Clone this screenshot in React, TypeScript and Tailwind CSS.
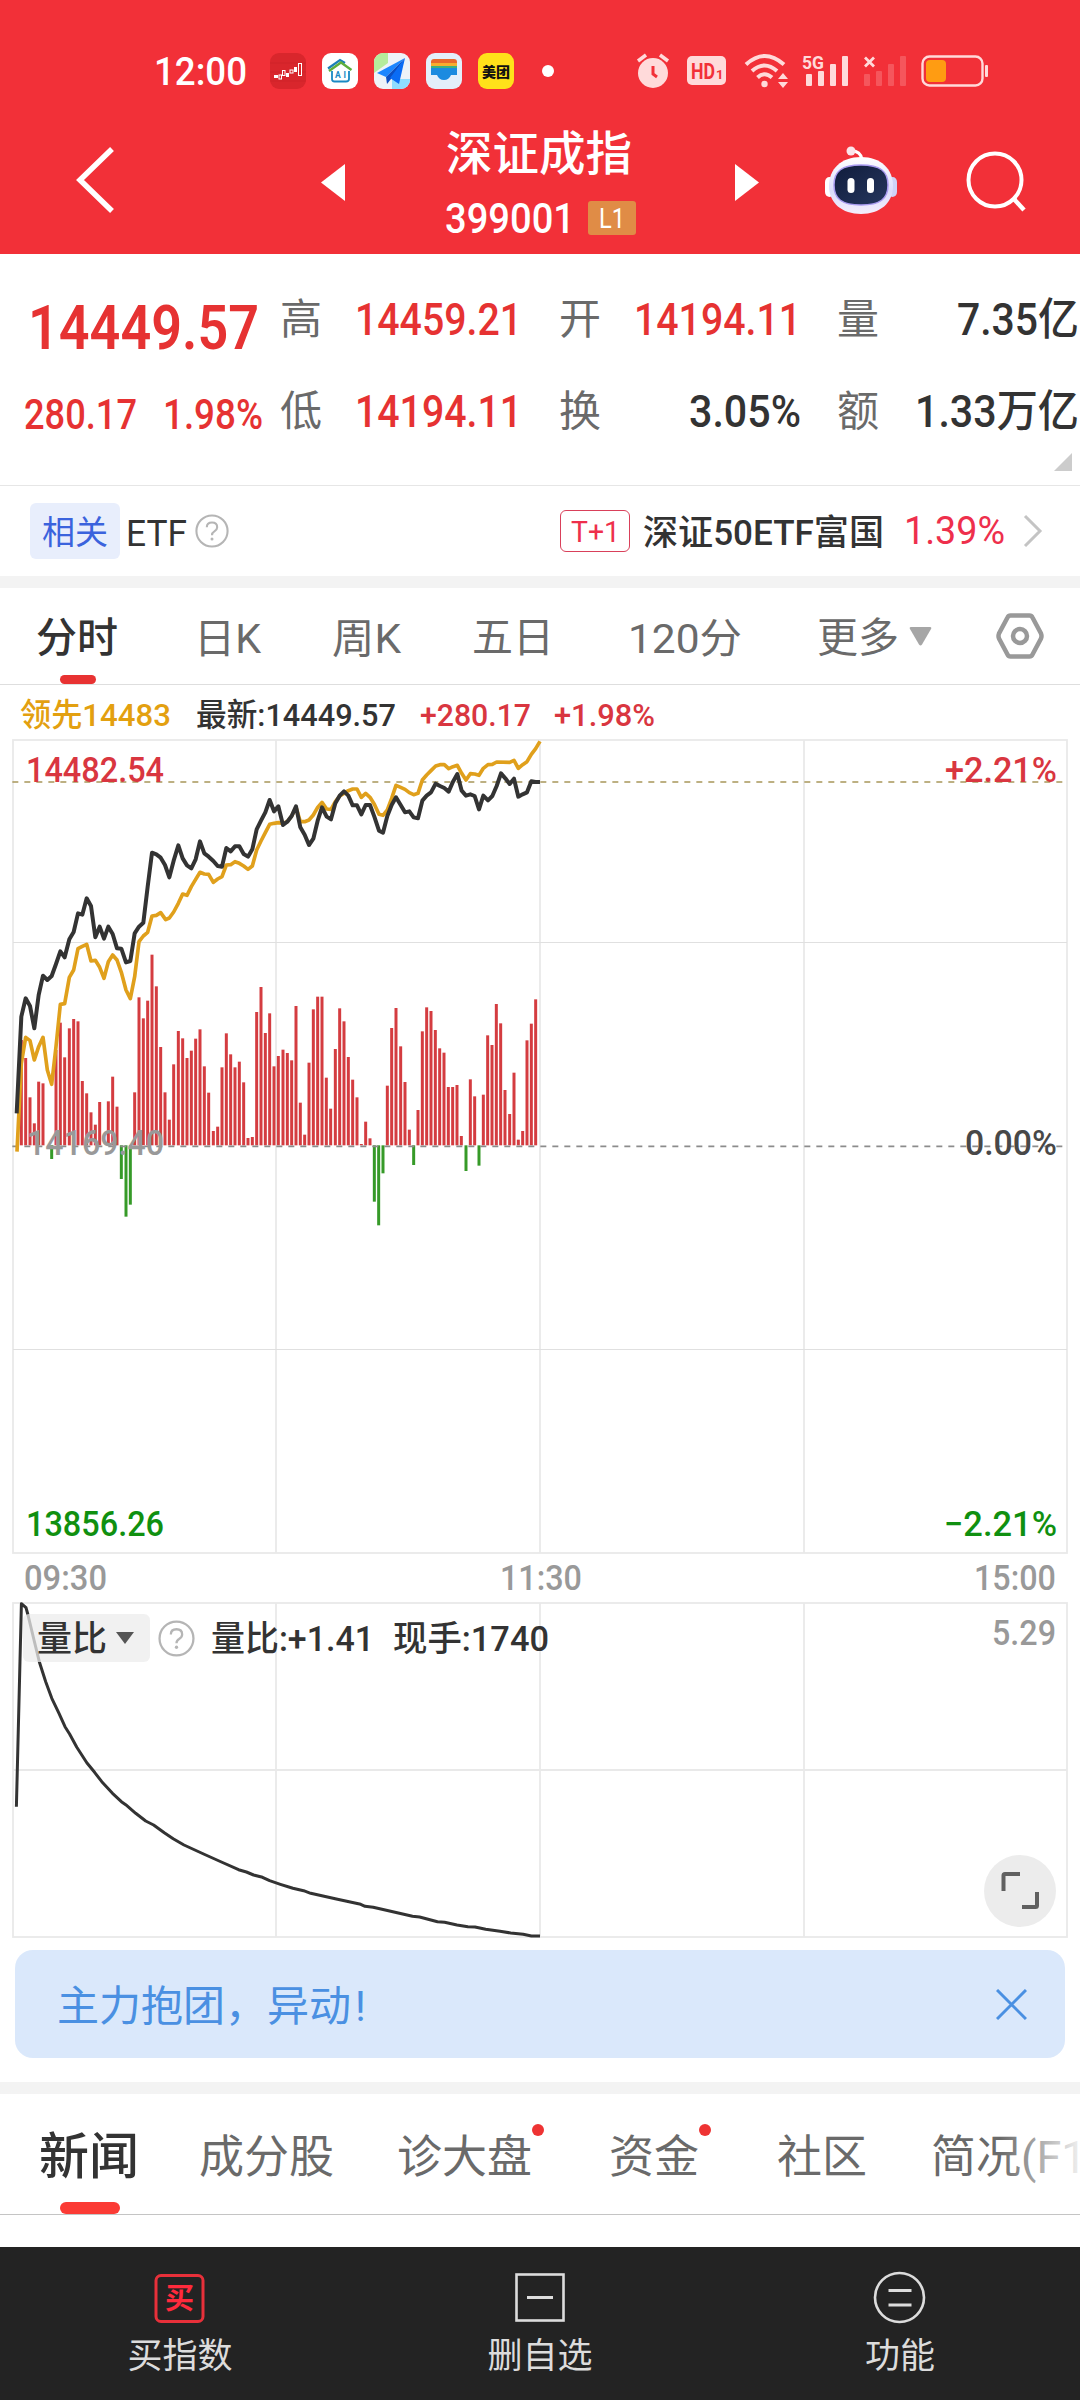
import type { ReactNode } from "react";

const PRICE_LINE =
  "50,1150 64,860 77,805 90,828 103,895 116,795 129,737 142,750 155,738 168,702 181,664 194,682 208,628 221,606 234,550 247,554 260,505 273,528 286,622 299,590 312,626 325,590 338,612 351,655 364,656 378,697 391,693 404,610 417,590 430,578 443,470 456,368 469,373 482,383 495,405 508,442 521,392 535,346 548,385 561,406 574,415 587,388 600,334 613,370 626,380 640,393 653,408 666,410 679,354 692,364 705,349 718,349 731,372 744,380 757,358 770,298 783,272 796,247 809,210 822,244 835,229 849,285 862,275 875,258 888,229 901,292 914,314 927,345 940,326 953,272 966,232 980,260 993,268 1006,220 1019,197 1032,184 1045,197 1058,226 1071,226 1084,253 1097,225 1110,225 1123,260 1137,302 1149,308 1162,258 1175,225 1188,202 1202,225 1215,247 1228,244 1241,262 1254,265 1267,212 1280,197 1293,187 1307,161 1320,168 1333,174 1346,185 1359,155 1372,132 1385,182 1398,197 1411,193 1424,198 1437,238 1450,197 1464,211 1477,198 1490,168 1503,130 1516,145 1529,162 1542,146 1555,200 1568,193 1581,187 1594,154 1607,156 1620,156";

const LEAD_LINE =
  "51,1265 64,1000 77,922 90,932 103,990 116,950 129,922 142,1020 155,1063 168,950 181,823 194,821 208,742 221,720 234,656 247,649 260,643 273,693 286,691 299,712 312,745 325,695 338,675 351,690 364,727 378,780 391,806 404,740 417,635 430,618 443,607 456,558 469,556 482,548 497,569 508,564 521,546 535,520 548,492 561,496 574,470 587,448 600,427 613,432 626,433 640,457 653,447 666,440 679,405 692,404 705,395 718,400 731,408 744,418 757,408 770,360 783,333 796,308 809,283 822,280 835,278 849,280 862,275 875,258 888,232 901,275 914,275 927,270 940,255 953,232 966,217 980,237 993,238 1006,215 1019,198 1032,190 1045,182 1058,177 1071,177 1084,202 1097,190 1110,202 1123,223 1137,253 1149,256 1162,240 1175,205 1188,166 1202,172 1215,178 1228,188 1241,194 1254,190 1267,150 1280,135 1293,122 1307,108 1320,104 1333,104 1346,116 1359,110 1372,106 1385,130 1398,150 1411,131 1424,132 1437,136 1450,115 1464,104 1477,103 1490,96 1529,97 1542,91 1555,115 1568,104 1581,95 1594,73 1607,56 1620,34";

const RATIO_LINE =
  "16.4,206.7 21.4,3.7 26,7.7 28,15 34,40 39.3,61.7 45.7,81.7 51.8,98.3 59,113.3 65,126.7 69.6,134 76.8,147.3 86.8,162.7 94.6,172.3 101.8,181.7 112.5,193.3 121.4,201.7 125.7,204.7 135.7,213.3 145.7,221 153.6,225 164.3,232.7 173.2,238.7 184,245 203.6,254 221.4,262 238.6,269.7 246.4,272 253.6,275 262.5,277.3 269.6,280.7 280.4,284.3 292.9,288.3 303.6,290.7 310.7,293.3 337.5,299.3 360.7,304.3 365,306.3 373.2,307.3 412.5,316.3 419.6,317 437.5,321.7 444.6,322.3 457,325 467.9,326.7 475,327 485.7,329.3 500,331.3 510.7,333 523.2,334.3 531.4,336 540,336";

const RED_BARS = [
  [64, 930], [77, 984], [90, 1102], [103, 1180], [116, 1055], [129, 1060], [168, 960], [181, 878], [194, 982], [208, 895],
  [221, 867], [234, 874], [247, 1053], [260, 1090], [273, 1147], [286, 1184], [299, 1116], [325, 1114], [338, 1040], [351, 1130],
  [404, 1087], [417, 802], [430, 865], [443, 812], [456, 674], [469, 769], [482, 951], [495, 1087], [508, 1169], [521, 1003],
  [535, 903], [548, 925], [561, 984], [574, 962], [587, 926], [600, 898], [613, 1009], [626, 1088], [640, 1203], [653, 1190],
  [666, 1012], [679, 910], [692, 973], [705, 1012], [718, 995], [731, 1057], [744, 1224], [757, 1221], [770, 846], [783, 771],
  [796, 909], [809, 850], [822, 1009], [835, 978], [849, 959], [862, 969], [875, 991], [888, 828], [901, 1118], [914, 1214],
  [927, 998], [940, 838], [953, 800], [966, 800], [979, 1043], [992, 1136], [1006, 957], [1019, 835], [1032, 874], [1045, 981],
  [1058, 1049], [1071, 1102], [1084, 1242], [1097, 1175], [1110, 1225], [1162, 1067], [1175, 894], [1188, 834], [1202, 949], [1215, 1056],
  [1228, 1199], [1254, 1140], [1267, 904], [1280, 832], [1293, 843], [1306, 900], [1319, 955], [1332, 968], [1345, 1071], [1358, 1071],
  [1371, 1065], [1384, 1218], [1411, 1048], [1424, 1099], [1450, 1094], [1463, 916], [1476, 945], [1489, 822], [1502, 880], [1515, 1080],
  [1529, 1152], [1542, 1028], [1555, 1229], [1568, 1203], [1581, 931], [1594, 881], [1607, 808],
];

const GREEN_BARS = [
  [155, 1287], [364, 1347], [378, 1460], [391, 1424], [1123, 1415], [1136, 1486], [1149, 1330], [1241, 1305], [1398, 1323], [1437, 1307],
];

type LabelProps = {
  x: number;
  y: number;
  w: number;
  size: number;
  fill: string;
  weight?: number;
  children: ReactNode;
};

// single line of text squeezed to a fixed width, y is the baseline
const Label = ({ x, y, w, size, fill, weight = 500, children }: LabelProps) => (
  <text x={x} y={y} fontSize={size} fontWeight={weight} fill={fill} textLength={w} lengthAdjust="spacingAndGlyphs">
    {children}
  </text>
);

// number in a box of width w, condensed to fill it
const Num = ({ w, size, weight = 500, children }: { w: number; size: number; weight?: number; children: ReactNode }) => (
  <svg width={w} height={size} className="block shrink-0 overflow-visible">
    <Label x={0} y={size * 0.855} w={w} size={size} fill="currentColor" weight={weight}>
      {children}
    </Label>
  </svg>
);

const StatusBar = () => (
  <div className="flex h-[107px] items-center pt-[35px]">
    <div className="ml-[154px]">
      <Num w={93} size={38}>12:00</Num>
    </div>
    <div className="ml-[23px] flex gap-4">
      <svg width="36" height="36" viewBox="0 0 36 36">
        <rect width="36" height="36" rx="9" fill="#d9262c" />
        <path d="M0 10h36M0 19h36M0 28h36" stroke="#c92026" strokeWidth="1" opacity=".5" />
        <g fill="#fff">
          <rect x="4" y="22" width="4" height="3" />
          <rect x="16" y="20" width="3" height="4" />
          <rect x="24" y="14" width="3" height="5" />
        </g>
        <g fill="none" stroke="#fff" strokeWidth="1">
          <rect x="9" y="22" width="2.5" height="4" />
          <rect x="12.500" y="17.500" width="2.500" height="5" />
          <rect x="20" y="17" width="3" height="3" />
          <rect x="28.500" y="10.500" width="3" height="12" />
        </g>
      </svg>
      <svg width="36" height="36" viewBox="0 0 36 36">
        <rect width="36" height="36" rx="9" fill="#fff" />
        <path d="M6 15.500 18 7l5 3" fill="none" stroke="#1b7fb8" strokeWidth="2.200" />
        <path d="m7 18 12-8.500 10.500 7.500" fill="none" stroke="#5fae3b" strokeWidth="2.400" />
        <path d="M10 18v8q0 2.500 2.500 2.500h11.500q3 0 3-2.500v-8" fill="none" stroke="#1989c4" strokeWidth="1.800" />
        <text x="13" y="24.500" fontSize="8.500" fontWeight="700" fill="#1989c4" textLength="11">AI</text>
      </svg>
      <svg width="36" height="36" viewBox="0 0 36 36">
        <clipPath id="mapClip"><rect width="36" height="36" rx="9" /></clipPath>
        <g clipPath="url(#mapClip)">
          <rect width="36" height="36" fill="#eef3f8" />
          <path d="M0 0h14v10L0 20z" fill="#b6ec9c" />
          <path d="M18 36V26h18v10z" fill="#8fdcff" />
          <path d="M31 5 3 20l9 4z" fill="#1c86ff" />
          <path d="m31 5-19 19 1 7 4-5z" fill="#0b4fc4" />
          <path d="M31 5 16 25l9 6z" fill="#0a6cf5" />
        </g>
      </svg>
      <svg width="36" height="36" viewBox="0 0 36 36">
        <rect width="36" height="36" rx="9" fill="#e3effb" />
        <rect x="5" y="6" width="26" height="12" rx="3" fill="#e9692c" />
        <rect x="5" y="10" width="26" height="8" fill="#f7ad2f" />
        <rect x="5" y="13" width="26" height="6" fill="#3fb07e" />
        <path d="M5 15h26v7h-6q-2 5-7 5t-7-5H5z" fill="#1b8be0" />
      </svg>
      <svg width="36" height="36" viewBox="0 0 36 36">
        <rect width="36" height="36" rx="9" fill="#ffe11a" />
        <text x="4" y="23.500" fontSize="14" fontWeight="900" fill="#111" textLength="28">美团</text>
      </svg>
    </div>
    <div className="ml-[28px] h-3 w-3 rounded-full bg-white" />
    <svg className="ml-[82px]" width="34" height="36" viewBox="0 0 34 36" fill="#ffdada">
      <circle cx="17" cy="20" r="15" />
      <path d="m2 8 8-6M24 2l8 6" stroke="#ffdada" strokeWidth="3.500" />
      <path d="M17 13v8l4 3" fill="none" stroke="#f23038" strokeWidth="3" />
    </svg>
    <svg className="ml-[17px]" width="40" height="30" viewBox="0 0 40 30">
      <rect width="39" height="29" rx="5" fill="#ffdada" />
      <text x="4" y="22.500" fontSize="22" fontWeight="700" fill="#f23038" textLength="24" lengthAdjust="spacingAndGlyphs">HD</text>
      <text x="29" y="22.500" fontSize="13" fontWeight="700" fill="#f23038">1</text>
    </svg>
    <svg className="ml-[17px]" width="46" height="36" viewBox="0 0 46 36">
      <g fill="none" stroke="#ffdada" strokeWidth="4">
        <path d="M2 11.500q18.500-17 38 0" />
        <path d="M8 18q12.500-11 25 0" />
        <path d="M13.500 24.500q7-6.500 14.500 0" />
      </g>
      <circle cx="20.500" cy="31" r="3.200" fill="#ffdada" />
      <path d="m39 20 5 6H34zM34 29h10l-5 6z" fill="#ffdada" />
    </svg>
    <svg className="ml-[12px] overflow-visible" width="48" height="36" viewBox="0 0 48 36" fill="#ffdada">
      <text x="0" y="16" fontSize="19" fontWeight="700" textLength="22" lengthAdjust="spacingAndGlyphs">5G</text>
      <rect x="4" y="21" width="6" height="12" rx="1" />
      <rect x="16" y="18" width="6" height="15" rx="1" />
      <rect x="28" y="11" width="6" height="22" rx="1" />
      <rect x="40" y="3" width="6" height="30" rx="1" />
    </svg>
    <svg className="ml-[13px]" width="46" height="36" viewBox="0 0 46 36" fill="#f5565c">
      <path d="m2 4.500 9 9m0-9-9 9" stroke="#ffdada" strokeWidth="2.800" />
      <rect x="1" y="21" width="6" height="12" rx="1" />
      <rect x="13" y="18" width="6" height="15" rx="1" />
      <rect x="25" y="11" width="6" height="22" rx="1" />
      <rect x="37" y="3" width="6" height="30" rx="1" />
    </svg>
    <svg className="ml-[12px]" width="68" height="32" viewBox="0 0 68 32">
      <rect x="1.500" y="1.500" width="60" height="29" rx="7" fill="none" stroke="#ffdada" strokeWidth="2.400" />
      <rect x="5" y="5" width="20" height="22" rx="4" fill="#ff9c12" />
      <rect x="64" y="10" width="3" height="12" rx="1" fill="#ffdada" />
    </svg>
  </div>
);

const Robot = () => (
  <svg width="74" height="70" viewBox="0 0 74 70">
    <defs>
      <linearGradient id="head" x1="0" y1="0" x2="0" y2="1">
        <stop offset="0" stopColor="#fff" />
        <stop offset=".6" stopColor="#dcdcfb" />
        <stop offset="1" stopColor="#f4eefc" />
      </linearGradient>
      <linearGradient id="face" x1="0" y1="0" x2="1" y2="1">
        <stop offset="0" stopColor="#101c3c" />
        <stop offset="1" stopColor="#26375e" />
      </linearGradient>
    </defs>
    <path d="M26 6q10-1 12 8" fill="none" stroke="#fff" strokeWidth="3" />
    <circle cx="27" cy="6" r="4.500" fill="#fbe4ea" />
    <rect x="1" y="32" width="9" height="20" rx="5" fill="#fff" />
    <rect x="64" y="32" width="9" height="20" rx="5" fill="#cfd2f7" />
    <path d="M37 12c20 0 32 12 32 29S56 69 37 69 5 58 5 41s12-29 32-29z" fill="url(#head)" />
    <path d="M37 20c19 0 27 6 27 20S56 60 37 60 10 54 10 40s8-20 27-20z" fill="url(#face)" stroke="#a99bf0" strokeWidth="1.500" />
    <rect x="23.500" y="33" width="7" height="15" rx="3.500" fill="#fff" />
    <rect x="43" y="33" width="7" height="15" rx="3.500" fill="#fff" />
  </svg>
);

const TitleBar = () => (
  <div className="flex h-[147px] items-start">
    <svg className="mt-[40px] ml-[75px]" width="40" height="66" viewBox="0 0 40 66">
      <path d="M37 2 5 33l32 31" fill="none" stroke="#fff" strokeWidth="5.500" />
    </svg>
    <svg className="mt-[57px] ml-[206px]" width="24" height="37" viewBox="0 0 24 37">
      <path d="M24 0v37L0 18.500z" fill="#fff" />
    </svg>
    <div className="ml-[101px] flex w-[192px] flex-col">
      <h1 className="mt-[24px] text-[46.5px] leading-none font-medium">深证成指</h1>
      <div className="mt-[19px] -ml-px flex items-center">
        <Num w={130} size={42}>399001</Num>
        <div className="ml-[13px] flex h-[34px] w-12 items-center justify-center rounded-[3px] bg-[#e08c46]">
          <Num w={26} size={28} weight={400}>L1</Num>
        </div>
      </div>
    </div>
    <svg className="mt-[57px] ml-[97px]" width="24" height="37" viewBox="0 0 24 37">
      <path d="M0 0v37l24-18.500z" fill="#fff" />
    </svg>
    <div className="mt-[38px] ml-[65px]">
      <Robot />
    </div>
    <svg className="mt-[43px] ml-[67px]" width="62" height="62" viewBox="0 0 62 62">
      <circle cx="30" cy="30" r="26.500" fill="none" stroke="#fff" strokeWidth="4" />
      <path d="m48 48 11 12" stroke="#fff" strokeWidth="4.500" />
    </svg>
  </div>
);

const Quote = () => (
  <div className="relative flex h-[232px] border-b border-[#e6e6e6] text-[42px] leading-none text-[#6a6a6a]">
    <div className="ml-[25px] w-[255px] text-[#e63232]">
      <div className="mt-[42px] ml-[3px]">
        <Num w={231} size={62} weight={600}>14449.57</Num>
      </div>
      <div className="mt-[35px] -ml-px flex gap-[26px]">
        <Num w={113} size={42}>280.17</Num>
        <Num w={100} size={42}>1.98%</Num>
      </div>
    </div>
    <div className="mt-[45px] flex flex-col gap-[50px]">
      <span>高</span>
      <span>低</span>
    </div>
    <div className="mt-[43px] ml-[33px] flex w-[168px] flex-col gap-[48px] text-[#e63232]">
      <Num w={167} size={44}>14459.21</Num>
      <Num w={167} size={44}>14194.11</Num>
    </div>
    <div className="mt-[45px] ml-[36px] flex flex-col gap-[50px]">
      <span>开</span>
      <span>换</span>
    </div>
    <div className="mt-[43px] ml-[32px] flex w-[168px] flex-col items-end gap-[48px] text-[#333]">
      <div className="text-[#e63232]">
        <Num w={167} size={44}>14194.11</Num>
      </div>
      <Num w={112} size={44}>3.05%</Num>
    </div>
    <div className="mt-[45px] ml-[36px] flex flex-col gap-[50px]">
      <span>量</span>
      <span>额</span>
    </div>
    <div className="mt-[43px] flex flex-1 flex-col items-end gap-[48px] pr-px text-[#333]">
      <Num w={122} size={44}>7.35亿</Num>
      <Num w={164} size={44}>1.33万亿</Num>
    </div>
    <svg className="absolute top-[199px] left-[1054px]" width="18" height="18" viewBox="0 0 18 18">
      <path d="M18 0v18H0z" fill="#ccc" />
    </svg>
  </div>
);

const Help = ({ size }: { size: number }) => (
  <svg width={size} height={size} viewBox="0 0 36 36">
    <circle cx="18" cy="18" r="16.500" fill="none" stroke="#b5b5b5" strokeWidth="2.200" />
    <path d="M12.500 14q0-5 5.500-5t5.500 5q0 2.500-3 4.500-2.500 1.500-2.500 4" fill="none" stroke="#b5b5b5" strokeWidth="2.200" />
    <circle cx="18" cy="26.500" r="1.600" fill="#b5b5b5" />
  </svg>
);

const EtfRow = () => (
  <div className="flex h-[90px] items-center leading-none text-[#333]">
    <div className="ml-[30px] flex h-14 w-[90px] items-center justify-center rounded-md bg-[#e8eefc] pt-0.5 text-[33px] text-[#3b63dd]">相关</div>
    <div className="mt-[3px] ml-[6px]">
      <Num w={61} size={36} weight={400}>ETF</Num>
    </div>
    <div className="ml-[8px]">
      <Help size={34} />
    </div>
    <div className="ml-[331px] flex h-[42px] w-[70px] items-center justify-center rounded-md border border-[#d9405a] text-[#ee2f4c]">
      <Num w={49} size={30} weight={400}>T+1</Num>
    </div>
    <div className="mt-[3px] ml-[13px]">
      <Num w={241} size={35}>深证50ETF富国</Num>
    </div>
    <div className="-mt-px ml-[20px] text-[#ee2f4c]">
      <Num w={101} size={39} weight={400}>1.39%</Num>
    </div>
    <svg className="ml-[18px]" width="20" height="34" viewBox="0 0 20 34">
      <path d="m2 2 15 15L2 32" fill="none" stroke="#c4c4c4" strokeWidth="3" />
    </svg>
  </div>
);

const PeriodTabs = () => (
  <div className="relative flex h-[97px] items-start border-b border-[#dedede] pt-[30px] text-[41px] leading-none text-[#6a6a6a]">
    <span className="ml-[36px] w-[158px] font-medium text-[#333]">分时</span>
    <span className="w-[138px]"><Num w={67} size={41} weight={400}>日K</Num></span>
    <span className="w-[140px]"><Num w={69} size={41} weight={400}>周K</Num></span>
    <span className="w-[156px]">五日</span>
    <span className="w-[189px]"><Num w={114} size={41} weight={400}>120分</Num></span>
    <span>更多</span>
    <svg className="mt-[9px] ml-[10px]" width="23" height="19" viewBox="0 0 23 19">
      <path d="M2 0h19q2 0 1 2L13 17.500q-1.500 2-3 0L1 2Q0 0 2 0z" fill="#a6a6a6" />
    </svg>
    <svg className="-mt-[6px] ml-[63px]" width="50" height="48" viewBox="0 0 50 48">
      <path d="M15.500 3.500h19q2 0 3 2l8.500 16q1 2.500 0 5l-8.500 16q-1 2-3 2h-19q-2 0-3-2L4 26.500q-1-2.500 0-5l8.500-16q1-2 3-2z" fill="none" stroke="#999" strokeWidth="4.500" />
      <circle cx="25" cy="24" r="7" fill="none" stroke="#999" strokeWidth="4.500" />
    </svg>
    <div className="absolute bottom-0 left-[60px] h-[9px] w-9 rounded-full bg-[#e83232]" />
  </div>
);

const Legend = () => (
  <div className="flex h-[45px] items-center pt-[14px] text-[#333]">
    <div className="ml-[20px] text-[#e3a010]"><Num w={151} size={32}>领先14483</Num></div>
    <div className="ml-[25px]"><Num w={200} size={32}>最新:14449.57</Num></div>
    <div className="ml-[24px] text-[#d93640]"><Num w={111} size={32}>+280.17</Num></div>
    <div className="ml-[23px] text-[#d93640]"><Num w={101} size={32}>+1.98%</Num></div>
  </div>
);

const MinuteChart = () => (
  <svg className="block" width="1080" height="830" viewBox="0 0 1080 830">
    <g stroke="#e9e9e9" strokeWidth="1.800" fill="none">
      <rect x="13" y="10" width="1054" height="813" />
      <path d="M276 10v813M540 10v813M804 10v813" />
      <path d="M13 212.500h1054M13 619.500h1054" stroke="#e0e0e0" strokeWidth="1" />
    </g>
    <g transform="scale(.33333)" fill="none">
      {RED_BARS.map(([x, y]) => (
        <path key={x} d={`M${x} ${y}V1246`} stroke="#d43c40" strokeWidth="9" />
      ))}
      {GREEN_BARS.map(([x, y]) => (
        <path key={x} d={`M${x} 1246V${y}`} stroke="#369a28" strokeWidth="9" />
      ))}
      <path d="M37 1249H3190" stroke="#8c8c8c" strokeWidth="5" strokeDasharray="18 18" />
      <path d="M37 156H3190" stroke="#a8975a" strokeWidth="5" strokeDasharray="18 18" />
    </g>
    <Label x={26} y={52} w={138} size={35} fill="#d93640">14482.54</Label>
    <Label x={27} y={425} w={137} size={35} fill="#999">14169.40</Label>
    <Label x={26} y={806} w={138} size={35} fill="#109010">13856.26</Label>
    <Label x={945} y={52} w={112} size={35} fill="#d93640">+2.21%</Label>
    <Label x={965} y={425} w={92} size={35} fill="#484848">0.00%</Label>
    <Label x={944} y={806} w={113} size={35} fill="#109010">−2.21%</Label>
    <g transform="scale(.33333)" fill="none" strokeLinejoin="round">
      <polyline points={LEAD_LINE} stroke="#e0a01c" strokeWidth="11" />
      <polyline points={PRICE_LINE} stroke="#333" strokeWidth="12" />
    </g>
  </svg>
);

const TimeAxis = () => (
  <div className="flex h-[40px] items-start justify-between pr-[24px] pl-[24px] text-[#999]">
    <Num w={83} size={35}>09:30</Num>
    <Num w={82} size={35}>11:30</Num>
    <Num w={82} size={35}>15:00</Num>
  </div>
);

const RatioChart = () => (
  <div className="relative h-[340px] w-full">
    <svg className="block" width="1080" height="340" viewBox="0 0 1080 340">
      <g stroke="#e9e9e9" strokeWidth="1.800" fill="none">
        <rect x="13" y="3" width="1054" height="334" />
        <path d="M276 3v334M540 3v334M804 3v334M13 170h1054" />
      </g>
      <polyline points={RATIO_LINE} fill="none" stroke="#333" strokeWidth="3" strokeLinejoin="round" />
    </svg>
    <div className="absolute top-[14px] left-[23px] flex h-12 items-center text-[#333]">
      <div className="flex h-12 w-[127px] items-center gap-[9px] rounded-md bg-[#ececec]/75 pl-[14px]">
        <Num w={70} size={35}>量比</Num>
        <svg width="18" height="12" viewBox="0 0 18 12"><path d="M0 0h18L9 12z" fill="#555" /></svg>
      </div>
      <div className="ml-[8px]"><Help size={37} /></div>
      <div className="ml-[16px]"><Num w={163} size={35}>量比:+1.41</Num></div>
      <div className="ml-[19px]"><Num w={156} size={35}>现手:1740</Num></div>
    </div>
    <div className="absolute top-[15px] right-[24px] text-[#999]">
      <Num w={64} size={35}>5.29</Num>
    </div>
    <button className="absolute top-[255px] left-[984px] flex h-[72px] w-[72px] items-center justify-center rounded-full bg-[#ececec]">
      <svg width="40" height="40" viewBox="0 0 40 40">
        <path d="M3.500 20V4.500q0-1.500 1.500-1.500h15M22 36h13.500q1.500 0 1.500-1.500V21" fill="none" stroke="#606060" strokeWidth="4" />
      </svg>
    </button>
  </div>
);

const Banner = () => (
  <div className="mx-[15px] mt-[10px] flex h-[108px] items-center justify-between rounded-[18px] bg-[#dae8fb] pr-[38px] pl-[42px] leading-none text-[#4a90e2]">
    <span className="mt-[5px] text-[42px]">主力抱团，异动<span className="ml-1">!</span></span>
    <svg width="31" height="31" viewBox="0 0 31 31">
      <path d="m1 1 29 29m0-29L1 30" stroke="#4a90e2" strokeWidth="3" />
    </svg>
  </div>
);

const NewsTabs = () => (
  <div className="relative flex h-[121px] items-center overflow-hidden border-b border-[#c4c4c4] pt-[6px] text-[45px] leading-none whitespace-nowrap text-[#6a6a6a]">
    <span className="ml-[39px] w-[160px] shrink-0 text-[50px] font-medium text-[#333]">新闻</span>
    <span className="w-[198px] shrink-0">成分股</span>
    <span className="relative w-[212px] shrink-0">
      诊大盘
      <i className="absolute -top-[11px] left-[135px] h-3 w-3 rounded-full bg-[#e33]" />
    </span>
    <span className="relative w-[168px] shrink-0">
      资金
      <i className="absolute -top-[11px] left-[90px] h-3 w-3 rounded-full bg-[#e33]" />
    </span>
    <span className="w-[154px] shrink-0">社区</span>
    <span className="shrink-0">简况(F10)</span>
    <div className="absolute top-0 right-0 h-[118px] w-[80px] bg-linear-to-r from-white/0 to-white/90" />
    <div className="absolute bottom-0 left-[60px] h-3 w-[60px] rounded-full bg-[#fb3b35]" />
  </div>
);

const FooterItem = ({ label, children }: { label: string; children: ReactNode }) => (
  <div className="flex w-[360px] flex-col items-center pt-[24px] text-[35px] leading-none text-[#dcdcdc]">
    <svg width="54" height="54" viewBox="0 0 54 54" fill="none">{children}</svg>
    <span className="mt-[14px]">{label}</span>
  </div>
);

const Footer = () => (
  <div className="flex h-[153px] bg-[#232323]">
    <FooterItem label="买指数">
      <rect x="3" y="4.500" width="47" height="46" rx="5" stroke="#e8303a" strokeWidth="3" />
      <text x="12" y="38" fontSize="29" fontWeight="700" fill="#ff2a3c">买</text>
    </FooterItem>
    <FooterItem label="删自选">
      <rect x="3.500" y="3.500" width="47" height="46" stroke="#dcdcdc" strokeWidth="2.600" />
      <path d="M14 26.500h26" stroke="#dcdcdc" strokeWidth="3" />
    </FooterItem>
    <FooterItem label="功能">
      <circle cx="26.500" cy="26.500" r="24.500" stroke="#dcdcdc" strokeWidth="2.600" />
      <path d="M15.500 19.500h23M15.500 34h23" stroke="#dcdcdc" strokeWidth="3" />
    </FooterItem>
  </div>
);

export default function App() {
  return (
    <div className="flex h-[2400px] w-[1080px] flex-col overflow-hidden bg-white font-[Roboto,'Noto_Sans_CJK_SC',sans-serif]">
      <div className="bg-[#f23038] text-white">
        <StatusBar />
        <TitleBar />
      </div>
      <Quote />
      <EtfRow />
      <div className="h-3 bg-[#f3f3f3]" />
      <PeriodTabs />
      <Legend />
      <MinuteChart />
      <TimeAxis />
      <RatioChart />
      <Banner />
      <div className="mt-6 h-3 bg-[#f3f3f3]" />
      <NewsTabs />
      <div className="flex-1" />
      <Footer />
    </div>
  );
}
